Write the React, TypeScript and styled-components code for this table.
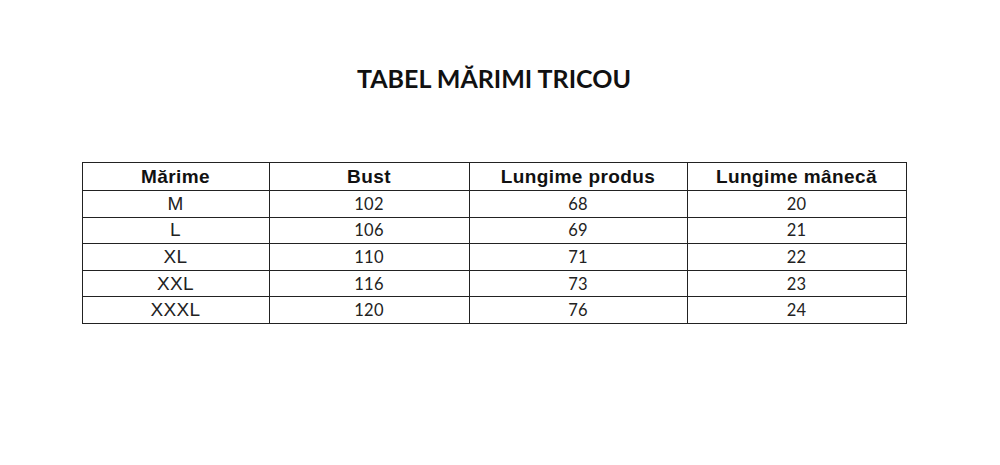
import React from 'react';
import styled, { createGlobalStyle } from 'styled-components';

const GlobalStyle = createGlobalStyle`
  html, body {
    margin: 0;
    padding: 0;
    background: #ffffff;
  }
`;

const Page = styled.div`
  width: 988px;
  display: flex;
  flex-direction: column;
  align-items: center;
  padding-top: 63px;
`;

const Title = styled.h1`
  margin: 0;
  font-family: Lato, "Open Sans", sans-serif;
  font-weight: 700;
  font-size: 25px;
  line-height: 30px;
  color: #111;
`;

const Table = styled.table`
  margin-top: 69px;
  border-collapse: collapse;
  border: 1px solid #222;
  table-layout: fixed;
`;

const HeadCell = styled.th<{ $w: number }>`
  width: ${p => p.$w}px;
  height: 27px;
  padding: 0;
  border: 1px solid #222;
  font-family: "Liberation Sans", Arial, sans-serif;
  font-weight: 700;
  font-size: 19px;
  letter-spacing: 0.4px;
  color: #111;
  text-align: center;
  vertical-align: middle;
`;

const Cell = styled.td<{ $num?: boolean }>`
  height: 25.6px;
  padding: 0;
  border: 1px solid #222;
  text-align: center;
  vertical-align: middle;
  color: #222;
  font-family: ${p => (p.$num ? 'Lato, "Open Sans", sans-serif' : '"Liberation Sans", Arial, sans-serif')};
  font-size: ${p => (p.$num ? '16.5px' : '19px')};
  letter-spacing: ${p => (p.$num ? '0.2px' : '0.3px')};
`;

const columns = [
  { label: 'Mărime', w: 186 },
  { label: 'Bust', w: 199 },
  { label: 'Lungime produs', w: 217 },
  { label: 'Lungime mânecă', w: 218 },
];

const rows = [
  ['M', 102, 68, 20],
  ['L', 106, 69, 21],
  ['XL', 110, 71, 22],
  ['XXL', 116, 73, 23],
  ['XXXL', 120, 76, 24],
];

export default function App() {
  return (
    <>
      <GlobalStyle />
      <Page>
        <Title>TABEL MĂRIMI TRICOU</Title>
        <Table>
          <thead>
            <tr>
              {columns.map(c => (
                <HeadCell key={c.label} $w={c.w}>{c.label}</HeadCell>
              ))}
            </tr>
          </thead>
          <tbody>
            {rows.map(r => (
              <tr key={r[0]}>
                <Cell>{r[0]}</Cell>
                <Cell $num>{r[1]}</Cell>
                <Cell $num>{r[2]}</Cell>
                <Cell $num>{r[3]}</Cell>
              </tr>
            ))}
          </tbody>
        </Table>
      </Page>
    </>
  );
}
